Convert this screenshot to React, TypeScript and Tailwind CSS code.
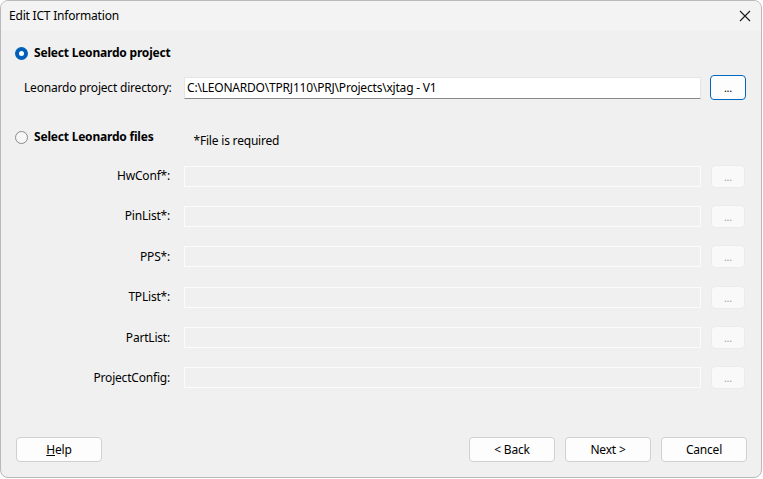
import React from "react";

const font = { fontFamily: '"Noto Sans", "Segoe UI", sans-serif', letterSpacing: "-0.2px" };

function FileRow({ label }: { label: string }) {
  return (
    <div className="flex h-[24px] items-center">
      <div className="w-[169px] whitespace-nowrap text-right text-[12px] text-black">{label}</div>
      <div className="ml-[14px] h-[21px] w-[517px] border border-[#fbfbfb] bg-[#f0f0f0]" />
      <div className="ml-[10px] flex h-[23px] w-[34px] items-center justify-center rounded-[4px] border border-[#ebebeb] bg-[#f9f9f9] text-[11px] leading-none text-[#a5a5a5]">
        ...
      </div>
    </div>
  );
}

function Btn({ children, w = "w-[86px]" }: { children: React.ReactNode; w?: string }) {
  return (
    <div
      className={`flex h-[25px] ${w} items-center justify-center rounded-[4px] border border-[#d0d0d0] bg-[#fdfdfd] text-[12px] text-black`}
    >
      {children}
    </div>
  );
}

export default function App() {
  return (
    <div className="h-[479px] w-[763px] bg-white" style={font}>
      <div className="flex h-[478px] w-[762px] flex-col overflow-hidden rounded-[8px] border border-[#b9b9b9] bg-[#f0f0f0]">
        <div className="flex h-[30px] shrink-0 items-center justify-between bg-[#f3f3f3] pl-[8px] pr-[10px]">
          <span className="text-[12px] text-black">Edit ICT Information</span>
          <svg width="12" height="12" viewBox="0 0 12 12">
            <path d="M1 1 L11 11 M11 1 L1 11" stroke="#1a1a1a" strokeWidth="1.1" fill="none" />
          </svg>
        </div>
        <div className="flex flex-1 flex-col">
          <div className="mt-[14px] flex h-[16px] items-center pl-[14px]">
            <div className="flex h-[13px] w-[13px] items-center justify-center rounded-full bg-[#005fb8]">
              <div className="h-[5px] w-[5px] rounded-full bg-white" />
            </div>
            <span className="ml-[6px] whitespace-nowrap text-[12px] font-bold text-black">Select Leonardo project</span>
          </div>
          <div className="mt-[14px] flex h-[25px] items-center">
            <div className="w-[169px] whitespace-nowrap pl-[23px] text-[12px] text-black">Leonardo project directory:</div>
            <div className="ml-[14px] flex h-[22px] w-[517px] items-center whitespace-nowrap border border-[#e5e5e5] border-b-[#8a8a8a] bg-white pl-[2px] text-[12px] text-black">
              C:\LEONARDO\TPRJ110\PRJ\Projects\xjtag - V1
            </div>
            <div className="ml-[9px] flex h-[25px] w-[36px] items-center justify-center rounded-[4px] border border-[#0067c0] bg-[#fdfdfd] text-[11px] leading-none text-black">
              ...
            </div>
          </div>
          <div className="mt-[29px] flex h-[16px] items-center pl-[14px]">
            <div className="h-[13px] w-[13px] rounded-full border border-[#8a8a8a] bg-[#f7f7f7]" />
            <span className="ml-[6px] whitespace-nowrap text-[12px] font-bold text-black">Select Leonardo files</span>
            <span className="ml-[40px] mt-[8px] whitespace-nowrap text-[12px] text-black">*File is required</span>
          </div>
          <div className="mt-[19px] flex flex-col gap-[16.4px]">
            <FileRow label="HwConf*:" />
            <FileRow label="PinList*:" />
            <FileRow label="PPS*:" />
            <FileRow label="TPList*:" />
            <FileRow label="PartList:" />
            <FileRow label="ProjectConfig:" />
          </div>
          <div className="mt-auto flex items-center justify-between pb-[15px] pl-[15px] pr-[14px]">
            <Btn>
              <span>
                <span className="underline">H</span>elp
              </span>
            </Btn>
            <div className="flex gap-[10px]">
              <Btn>&lt; Back</Btn>
              <Btn>Next &gt;</Btn>
              <Btn>Cancel</Btn>
            </div>
          </div>
        </div>
      </div>
    </div>
  );
}
